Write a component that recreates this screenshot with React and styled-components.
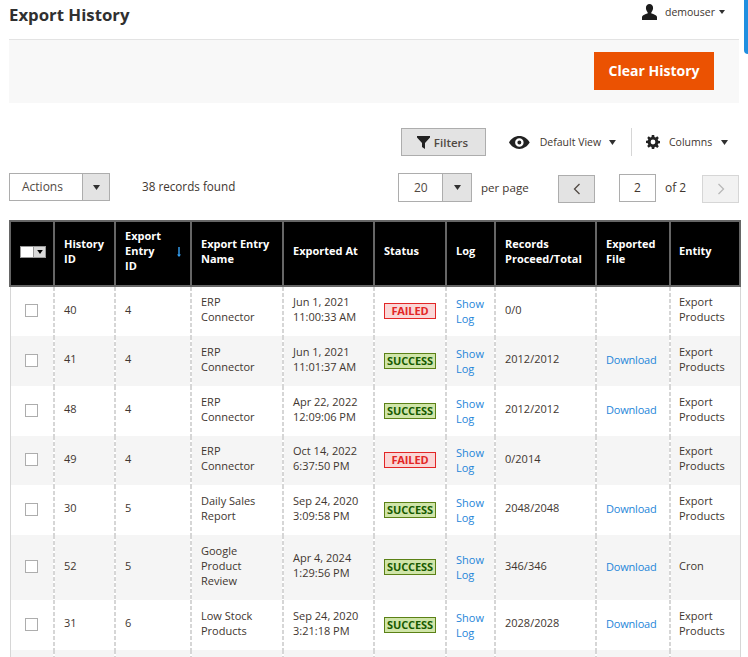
import React from "react";
import styled, { createGlobalStyle } from "styled-components";

const Global = createGlobalStyle`
  html, body { margin: 0; padding: 0; background: #fff; height: 657px; overflow: hidden; }
  body { font-family: "Open Sans", "Noto Sans", sans-serif; font-size: 12px; color: #41362f; }
  * { box-sizing: border-box; }
`;

const Page = styled.div`
  position: relative;
  width: 748px;
  height: 657px;
  overflow: hidden;
  padding: 0 9px;
`;
const SideTab = styled.div`
  position: absolute;
  right: 0;
  top: -6px;
  width: 4px;
  height: 60px;
  background: #1f8fe0;
  border-radius: 0 0 0 4px;
`;
const TopBar = styled.header`
  display: flex;
  justify-content: space-between;
  height: 40px;
  border-bottom: 1px solid #e3e3e3;
`;
const Title = styled.h1`
  margin: 3px 0 0;
  font-size: 16.8px;
  line-height: 24px;
  font-weight: 700;
  color: #303030;
`;
const User = styled.div`
  display: flex;
  align-items: center;
  align-self: flex-start;
  height: 24px;
  margin-right: 14px;
  font-size: 10.5px;
  color: #41362f;
  gap: 8px;
`;
const Caret = styled.span`
  display: inline-block;
  width: 0;
  height: 0;
  margin-left: -4px;
  border-left: 3px solid transparent;
  border-right: 3px solid transparent;
  border-top: 4px solid #303030;
`;
const ActionBand = styled.div`
  display: flex;
  justify-content: flex-end;
  height: 63px;
  padding: 12px 25px 0 0;
  background: #f8f8f8;
`;
const ClearButton = styled.button`
  width: 120px;
  height: 38px;
  border: 0;
  background: #eb5202;
  color: #fff;
  font: 700 14px/38px "Open Sans", sans-serif;
  padding: 0;
`;
const ToolsRow = styled.div`
  display: flex;
  align-items: center;
  height: 28px;
  margin-top: 25px;
  padding-left: 392px;
`;
const FilterButton = styled.button`
  display: flex;
  align-items: center;
  justify-content: center;
  flex-shrink: 0;
  gap: 4px;
  width: 85px;
  height: 28px;
  padding: 0 2px 0 0;
  background: #e3e3e3;
  border: 1px solid #adadad;
  font: 600 11.5px "Open Sans", sans-serif;
  color: #514943;
`;
const ViewToggle = styled.div`
  display: flex;
  align-items: center;
  flex-shrink: 0;
  white-space: nowrap;
  width: ${(p) => p.$width}px;
  margin-left: ${(p) => p.$left}px;
  font-size: 10.5px;
  color: #41362f;
`;
const ToggleLabel = styled.span`
  margin-left: ${(p) => p.$gap}px;
  margin-right: ${(p) => p.$after}px;
`;
const Divider = styled.div`
  flex-shrink: 0;
  width: 1px;
  height: 28px;
  background: #d6d6d6;
  margin-left: 15px;
`;
const PagerRow = styled.div`
  display: flex;
  align-items: flex-start;
  height: 30px;
  margin-top: 17px;
`;
const Select = styled.div`
  display: flex;
  flex-shrink: 0;
  width: ${(p) => p.$width}px;
  height: ${(p) => p.$height}px;
  border: 1px solid #adadad;
  background: #fff;
`;
const SelectValue = styled.div`
  flex: 1;
  padding-left: ${(p) => p.$pad}px;
  font-size: 12px;
  line-height: ${(p) => p.$line}px;
  color: #514943;
`;
const SelectArrow = styled.div`
  display: flex;
  align-items: center;
  justify-content: center;
  width: ${(p) => p.$w}px;
  background: #e3e3e3;
  border-left: 1px solid #adadad;
`;
const Records = styled.div`
  flex-shrink: 0;
  margin-left: 32px;
  width: 256px;
  font-size: 11.7px;
  line-height: 26px;
  color: #41362f;
`;
const PerPage = styled.div`
  flex-shrink: 0;
  margin-left: 9px;
  width: 77px;
  font-size: 11.6px;
  line-height: 30px;
  color: #41362f;
`;
const PageBtn = styled.div`
  display: flex;
  flex-shrink: 0;
  align-items: center;
  justify-content: center;
  width: 37px;
  height: 28px;
  margin-top: 2px;
  background: ${(p) => (p.$off ? "#f2f2f2" : "#e3e3e3")};
  border: 1px solid ${(p) => (p.$off ? "#d6d6d6" : "#adadad")};
`;
const PageInput = styled.div`
  flex-shrink: 0;
  width: 37px;
  height: 28px;
  margin: 1px 0 0 24px;
  border: 1px solid #adadad;
  text-align: center;
  font-size: 12px;
  line-height: 26px;
  color: #41362f;
`;
const PageOf = styled.div`
  flex-shrink: 0;
  width: 37px;
  margin-left: 9px;
  font-size: 12px;
  line-height: 30px;
  color: #41362f;
`;
const Table = styled.table`
  width: 730px;
  margin-top: 17px;
  border-collapse: collapse;
  table-layout: fixed;
  font-size: 11px;
  color: #41362f;
`;
const Th = styled.th`
  height: 65px;
  padding: 0 ${(p) => p.$right || 9}px 6px ${(p) => p.$left || 9}px;
  background: #000;
  color: #fff;
  font-size: 11px;
  line-height: 15px;
  font-weight: 700;
  text-align: left;
  border: 2px solid #666;
  position: relative;
`;
const Row = styled.tr`
  background: ${(p) => (p.$alt ? "#f5f5f5" : "#fff")};
`;
const Td = styled.td`
  position: relative;
  height: ${(p) => p.$h}px;
  padding: 0 9px 5px;
  line-height: 15px;
  vertical-align: middle;
  border-left: 2px solid transparent;
  border-right: 2px solid transparent;
  &::after {
    content: "";
    position: absolute;
    top: 0;
    bottom: 0;
    right: -2px;
    width: 2px;
    background: repeating-linear-gradient(#d6d6d6 0 4px, transparent 4px 6px);
  }
  &:first-child { border-left: 1px solid #d6d6d6; padding-bottom: 2px; }
  &:last-child { border-right: 1px solid #d6d6d6; padding-left: 8px; }
  &:last-child::after { display: none; }
`;
const Check = styled.div`
  width: 13px;
  height: 13px;
  margin-left: 5px;
  border: 1px solid #adadad;
  background: #fff;
`;
const HeadSelect = styled.div`
  display: flex;
  width: 26px;
  height: 12px;
  margin-top: 3px;
  background: #fff;
  border: 1px solid #999;
`;
const HeadArrow = styled.div`
  display: flex;
  align-items: center;
  justify-content: center;
  width: 13px;
  margin-left: 12px;
  background: #d9d9d9;
  border-left: 1px solid #999;
`;
const SortArrow = styled.svg`
  position: absolute;
  right: 9px;
  top: 25px;
`;
const LogLink = styled.a`
  display: block;
  margin-top: 4px;
  color: #1f86d9;
`;
const FileLink = styled.a`
  display: block;
  margin-top: 2px;
  color: #1f86d9;
  letter-spacing: -0.2px;
`;
const Badge = styled.span`
  display: block;
  width: 52px;
  height: 16px;
  margin-top: 4px;
  border: 1px solid ${(p) => (p.$ok ? "#5b8116" : "#e22626")};
  background: ${(p) => (p.$ok ? "#d0e5a9" : "#fad7d7")};
  color: ${(p) => (p.$ok ? "#185b00" : "#e22626")};
  font-size: 11px;
  line-height: 14px;
  font-weight: 700;
  letter-spacing: -0.1px;
  text-align: center;
  white-space: nowrap;
  overflow: hidden;
`;

const widths = [44, 61, 76, 92, 91, 72, 49, 101, 74, 70];
const rows = [
  ["40", "4", ["ERP", "Connector"], ["Jun 1, 2021", "11:00:33 AM"], false, "0/0", false, ["Export", "Products"], 50],
  ["41", "4", ["ERP", "Connector"], ["Jun 1, 2021", "11:01:37 AM"], true, "2012/2012", true, ["Export", "Products"], 50],
  ["48", "4", ["ERP", "Connector"], ["Apr 22, 2022", "12:09:06 PM"], true, "2012/2012", true, ["Export", "Products"], 50],
  ["49", "4", ["ERP", "Connector"], ["Oct 14, 2022", "6:37:50 PM"], false, "0/2014", false, ["Export", "Products"], 49],
  ["30", "5", ["Daily Sales", "Report"], ["Sep 24, 2020", "3:09:58 PM"], true, "2048/2048", true, ["Export", "Products"], 50],
  ["52", "5", ["Google", "Product", "Review"], ["Apr 4, 2024", "1:29:56 PM"], true, "346/346", true, ["Cron"], 65],
  ["31", "6", ["Low Stock", "Products"], ["Sep 24, 2020", "3:21:18 PM"], true, "2028/2028", true, ["Export", "Products"], 50],
];

const Lines = ({ items }) => items.map((t, i) => <div key={i}>{t}</div>);
const Tri = ({ color = "#303030", w = 7, h = 5 }) => (
  <svg width={w} height={h} viewBox="0 0 7 5"><path d="M0 0h7L3.5 5z" fill={color} /></svg>
);

export default function App() {
  return (
    <Page>
      <Global />
      <SideTab />
      <TopBar>
        <Title>Export History</Title>
        <User>
          <svg width="15" height="16" viewBox="0 0 16 17">
            <path d="M8 0c2.4 0 3.8 1.8 3.8 4.2 0 1.8-.8 3.4-1.700 4.500-.4.6-.3 1.200.3 1.500 1.900.9 4.800 1.600 5.600 3.300V17H0v-3.500c.8-1.700 3.700-2.400 5.600-3.300.6-.3.7-.9.3-1.500C5 7.600 4.200 6 4.200 4.200 4.200 1.800 5.600 0 8 0z" fill="#1c1c1c" />
          </svg>
          <span>demouser</span>
          <Caret />
        </User>
      </TopBar>
      <ActionBand>
        <ClearButton>Clear History</ClearButton>
      </ActionBand>
      <ToolsRow>
        <FilterButton>
          <svg width="13" height="13" viewBox="0 0 13 13"><path d="M0 0h13v1.500L8 7v6L5 11V7L0 1.500z" fill="#222" /></svg>
          Filters
        </FilterButton>
        <ViewToggle $width={107} $left={23}>
          <svg width="21" height="13" viewBox="0 0 21 13">
            <path fillRule="evenodd" d="M10.500 0C15 0 18.800 2.700 21 6.500 18.800 10.300 15 13 10.500 13S2.200 10.300 0 6.500C2.200 2.700 6 0 10.500 0zm0 2.200a4.300 4.300 0 1 0 0 8.600 4.300 4.300 0 0 0 0-8.600zm0 2.300a2 2 0 1 1 0 4 2 2 0 0 1 0-4z" fill="#222" />
          </svg>
          <ToggleLabel $gap={10} $after={8}>Default View</ToggleLabel>
          <Tri />
        </ViewToggle>
        <Divider />
        <ViewToggle $width={100} $left={14}>
          <svg width="14" height="14" viewBox="0 0 14 14">
            <path fillRule="evenodd" d="M5.800 0h2.400l.3 1.900 1.200.5L11.300 1.300 12.800 3l-1.100 1.500.5 1.200 1.800.3v2.200l-1.800.3-.5 1.200 1.100 1.600-1.500 1.600-1.600-1.100-1.200.5L8.200 14H5.800l-.3-1.900-1.200-.5-1.600 1.100L1.200 11l1.100-1.600-.5-1.200L0 7.900V5.800l1.800-.3.5-1.200L1.200 2.900 2.700 1.300l1.600 1.100 1.200-.5zM7 4.600a2.400 2.400 0 1 0 0 4.800 2.400 2.400 0 0 0 0-4.800z" fill="#222" />
          </svg>
          <ToggleLabel $gap={9} $after={9}>Columns</ToggleLabel>
          <Tri />
        </ViewToggle>
      </ToolsRow>
      <PagerRow>
        <Select $width={101} $height={28}>
          <SelectValue $pad={12} $line={25}>Actions</SelectValue>
          <SelectArrow $w={27}><Tri /></SelectArrow>
        </Select>
        <Records>38 records found</Records>
        <Select $width={74} $height={29}>
          <SelectValue $pad={15} $line={28}>20</SelectValue>
          <SelectArrow $w={29}><Tri /></SelectArrow>
        </Select>
        <PerPage>per page</PerPage>
        <PageBtn>
          <svg width="8" height="12" viewBox="0 0 8 12"><path d="M6.500 1L1.500 6l5 5" fill="none" stroke="#514943" strokeWidth="1.300" /></svg>
        </PageBtn>
        <PageInput>2</PageInput>
        <PageOf>of 2</PageOf>
        <PageBtn $off>
          <svg width="8" height="12" viewBox="0 0 8 12"><path d="M1.500 1l5 5-5 5" fill="none" stroke="#b8b8b8" strokeWidth="1.300" /></svg>
        </PageBtn>
      </PagerRow>
      <Table>
        <colgroup>
          {widths.map((w, i) => <col key={i} style={{ width: w }} />)}
        </colgroup>
        <thead>
          <tr>
            <Th>
              <HeadSelect><HeadArrow><Tri color="#000" w={6} h={4} /></HeadArrow></HeadSelect>
            </Th>
            <Th>History ID</Th>
            <Th $right={24}>
              Export Entry ID
              <SortArrow width="4" height="10" viewBox="0 0 4 10">
                <path d="M1.300 0h1.400v7.500H4L2 10 0 7.500h1.300z" fill="#36a3f7" />
              </SortArrow>
            </Th>
            <Th>Export Entry Name</Th>
            <Th>Exported At</Th>
            <Th>Status</Th>
            <Th>Log</Th>
            <Th>Records Proceed/Total</Th>
            <Th>Exported File</Th>
            <Th $left={8}>Entity</Th>
          </tr>
        </thead>
        <tbody>
          {rows.map((r, i) => (
            <Row key={r[0]} $alt={i % 2 === 1}>
              <Td $h={r[8]}><Check /></Td>
              <Td>{r[0]}</Td>
              <Td>{r[1]}</Td>
              <Td><Lines items={r[2]} /></Td>
              <Td><Lines items={r[3]} /></Td>
              <Td><Badge $ok={r[4]}>{r[4] ? "SUCCESS" : "FAILED"}</Badge></Td>
              <Td><LogLink>Show Log</LogLink></Td>
              <Td>{r[5]}</Td>
              <Td>{r[6] && <FileLink>Download</FileLink>}</Td>
              <Td><Lines items={r[7]} /></Td>
            </Row>
          ))}
          <Row $alt>
            <Td $h={50} />
            <Td /><Td /><Td /><Td /><Td /><Td /><Td /><Td /><Td />
          </Row>
        </tbody>
      </Table>
    </Page>
  );
}
